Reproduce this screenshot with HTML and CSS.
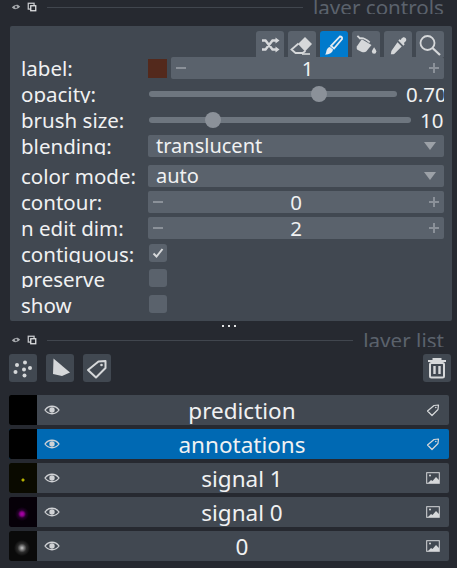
FILE: index.html
```html
<!DOCTYPE html>
<html lang="en">
<head>
    <meta charset="UTF-8">
    <title>napari layers</title>
    <link rel="stylesheet" href="styles.css">
</head>
<body>

    <div class="dock-title">
        <svg class="title-icon" viewBox="0 0 12 12"><path d="M1 6.500C3 4 6 3 8.500 3.500L11 5.500C9 8 6 9 3.500 8.500Z" fill="#a6a9ad"/><circle cx="6" cy="6" r="1.500" fill="#3a3d44"/></svg>
        <svg class="title-icon" viewBox="0 0 12 12"><rect x="1.500" y="1.500" width="7" height="7" fill="none" stroke="#c9cbce" stroke-width="1.500"/><rect x="4.500" y="4.500" width="6" height="6" fill="#262930" stroke="#e4e5e6" stroke-width="1.500"/></svg>
        <div class="title-line"></div>
        <span class="title-text">layer controls</span>
    </div>

    <div class="controls">
        <div class="mode-buttons">
            <div class="mode-btn">
                <svg viewBox="0 0 28 26"><g transform="translate(0 1)"><path d="M6 8.500h3.500l7 9H20M6 17.500h3.500l7-9H20" fill="none" stroke="#d6d8da" stroke-width="2.400"/><path d="M19.500 5.500l4 3-4 3zM19.500 14.500l4 3-4 3z" fill="#d6d8da"/></g></svg>
            </div>
            <div class="mode-btn">
                <svg viewBox="0 0 28 26"><path d="M17 6l7 7-7 7.500-7-7.500z" fill="#d6d8da"/><path d="M10.500 12.500L3.500 18.500l4 3.500h7l3-2" fill="none" stroke="#d6d8da" stroke-width="1.800"/><path d="M14 23h8" stroke="#d6d8da" stroke-width="1.600"/></svg>
            </div>
            <div class="mode-btn mode-btn-active">
                <svg viewBox="0 0 28 26"><g transform="translate(-2 2)"><path d="M22 3.500c1.500 0 2.500 1 2 2.500L16 15.500l-3-2.500z" fill="none" stroke="#e4eaf0" stroke-width="1.800"/><path d="M12 14l3 2.500c-.5 3.500-3.500 5-8 5 1.500-1.500 1-3 1.800-4.800.7-1.500 2-2.500 3.200-2.700z" fill="#e4eaf0"/></g></svg>
            </div>
            <div class="mode-btn">
                <svg viewBox="0 0 28 26"><g transform="translate(1 3) scale(.88)"><path d="M5 2l3 3" stroke="#d6d8da" stroke-width="2"/><path d="M10 6l11 6.500-6 7.500c-1 1-3 1-5 .5l-5-2.500c-1-1-1-2-.5-4z" fill="#d6d8da"/><path d="M7 5.500c3-2 7-.5 12 4" fill="none" stroke="#d6d8da" stroke-width="2"/><path d="M24 15c2 3 2.500 4 2.500 5a2.500 2.500 0 0 1-5 0c0-1 .5-2 2.500-5z" fill="#d6d8da"/></g></svg>
            </div>
            <div class="mode-btn">
                <svg viewBox="0 0 28 26"><g transform="translate(2 4) scale(.85)"><path d="M18 4.500c1.500-2 3.500-2.500 5-1s1 3.500-1 5l-1 1 1 1.500-1.500 1.500-6-6L16 5l1.500 1z" fill="#d6d8da"/><path d="M13.500 8.500l5 5-8.500 8.500c-1 .5-2 1-3 .5-1 .5-2 0-1-1 0-1 0-2 .5-3z" fill="#d6d8da"/></g></svg>
            </div>
            <div class="mode-btn">
                <svg viewBox="0 0 28 26"><circle cx="11.500" cy="12" r="7" fill="none" stroke="#d6d8da" stroke-width="1.800"/><path d="M16.500 17l7.500 7" stroke="#d6d8da" stroke-width="2.200"/></svg>
            </div>
        </div>

        <div class="row">
            <span class="row-label">label:</span>
            <div class="label-control">
                <div class="swatch"></div>
                <div class="spin">
                    <span class="spin-minus"></span>
                    <span class="spin-value">1</span>
                    <span class="spin-plus"></span>
                </div>
            </div>
        </div>
        <div class="row">
            <span class="row-label">opacity:</span>
            <div class="slider-control">
                <div class="slider slider-short"><div class="slider-thumb thumb-opacity"></div></div>
                <span class="slider-value">0.70</span>
            </div>
        </div>
        <div class="row">
            <span class="row-label">brush size:</span>
            <div class="slider-control">
                <div class="slider"><div class="slider-thumb thumb-brush"></div></div>
                <span class="slider-value">10</span>
            </div>
        </div>
        <div class="row row-combo-first">
            <span class="row-label">blending:</span>
            <div class="combo"><span>translucent</span><div class="combo-arrow"></div></div>
        </div>
        <div class="row">
            <span class="row-label">color mode:</span>
            <div class="combo"><span>auto</span><div class="combo-arrow"></div></div>
        </div>
        <div class="row">
            <span class="row-label">contour:</span>
            <div class="spin">
                <span class="spin-minus"></span>
                <span class="spin-value">0</span>
                <span class="spin-plus"></span>
            </div>
        </div>
        <div class="row">
            <span class="row-label">n edit dim:</span>
            <div class="spin">
                <span class="spin-minus"></span>
                <span class="spin-value">2</span>
                <span class="spin-plus"></span>
            </div>
        </div>
        <div class="row row-check">
            <span class="row-label">contiguous:</span>
            <div class="checkbox">
                <svg viewBox="0 0 18 18"><path d="M4.500 9.500l3 3 6-7.500" fill="none" stroke="#d6d8da" stroke-width="2"/></svg>
            </div>
        </div>
        <div class="row row-check row-preserve">
            <span class="row-label">preserve</span>
            <div class="checkbox"></div>
        </div>
        <div class="row row-check">
            <span class="row-label">show</span>
            <div class="checkbox"></div>
        </div>
    </div>

    <div class="splitter"><i></i><i></i><i></i></div>

    <div class="dock-title">
        <svg class="title-icon" viewBox="0 0 12 12"><path d="M1 6.500C3 4 6 3 8.500 3.500L11 5.500C9 8 6 9 3.500 8.500Z" fill="#a6a9ad"/><circle cx="6" cy="6" r="1.500" fill="#3a3d44"/></svg>
        <svg class="title-icon" viewBox="0 0 12 12"><rect x="1.500" y="1.500" width="7" height="7" fill="none" stroke="#c9cbce" stroke-width="1.500"/><rect x="4.500" y="4.500" width="6" height="6" fill="#262930" stroke="#e4e5e6" stroke-width="1.500"/></svg>
        <div class="title-line"></div>
        <span class="title-text">layer list</span>
    </div>

    <div class="list-buttons">
        <div class="list-btn">
            <svg viewBox="0 0 28 28"><g fill="#d6d8da"><circle cx="8" cy="11" r="2"/><circle cx="16" cy="8.500" r="2"/><circle cx="21" cy="14" r="2"/><circle cx="15" cy="15.500" r="2"/><circle cx="6.500" cy="18" r="2"/><circle cx="15.500" cy="21.500" r="2"/></g></svg>
        </div>
        <div class="list-btn">
            <svg viewBox="0 0 28 28"><path d="M7.500 4.500L24 18.500 16 22 7 20z" fill="#d6d8da"/></svg>
        </div>
        <div class="list-btn">
            <svg viewBox="0 0 28 28"><path d="M5 16L15.500 7.500l7-.5 0 7L13 23.500z" fill="none" stroke="#d6d8da" stroke-width="2" stroke-linejoin="round"/><circle cx="18.500" cy="11" r="1.300" fill="#d6d8da"/></svg>
        </div>
        <div class="list-btn list-btn-trash">
            <svg viewBox="0 0 28 28"><path d="M5 7h18M10.500 6.500V5h7v1.500" fill="none" stroke="#d6d8da" stroke-width="2"/><rect x="7" y="9" width="14" height="14.500" rx="1.500" fill="none" stroke="#d6d8da" stroke-width="2"/><path d="M11.500 12v8M16.500 12v8" stroke="#d6d8da" stroke-width="2.400"/></svg>
        </div>
    </div>

    <div class="layer-list">
        <div class="layer">
            <div class="thumb"></div>
            <svg class="eye" viewBox="0 0 16 12"><path d="M1 6c3.500-5 10.500-5 14 0-3.500 5-10.500 5-14 0z" fill="none" stroke="#d0d2d5" stroke-width="1.300"/><circle cx="8" cy="6" r="2.700" fill="#d0d2d5"/></svg>
            <span class="layer-name">prediction</span>
            <svg class="layer-type" viewBox="0 0 14 14"><path d="M1.500 8L8 2.500l4.500-.5-.5 4.500L6 12.500z" fill="none" stroke="#d6d8da" stroke-width="1.200" stroke-linejoin="round"/><circle cx="9.800" cy="4.500" r=".8" fill="#d6d8da"/></svg>
        </div>
        <div class="layer layer-selected">
            <div class="thumb"></div>
            <svg class="eye" viewBox="0 0 16 12"><path d="M1 6c3.500-5 10.500-5 14 0-3.500 5-10.500 5-14 0z" fill="none" stroke="#d0d2d5" stroke-width="1.300"/><circle cx="8" cy="6" r="2.700" fill="#d0d2d5"/></svg>
            <span class="layer-name">annotations</span>
            <svg class="layer-type" viewBox="0 0 14 14"><path d="M1.500 8L8 2.500l4.500-.5-.5 4.500L6 12.500z" fill="none" stroke="#d6d8da" stroke-width="1.200" stroke-linejoin="round"/><circle cx="9.800" cy="4.500" r=".8" fill="#d6d8da"/></svg>
        </div>
        <div class="layer">
            <div class="thumb thumb-yellow"></div>
            <svg class="eye" viewBox="0 0 16 12"><path d="M1 6c3.500-5 10.500-5 14 0-3.500 5-10.500 5-14 0z" fill="none" stroke="#d0d2d5" stroke-width="1.300"/><circle cx="8" cy="6" r="2.700" fill="#d0d2d5"/></svg>
            <span class="layer-name">signal 1</span>
            <svg class="layer-type" viewBox="0 0 14 14"><rect x=".7" y="1.700" width="12.600" height="10.600" fill="none" stroke="#d6d8da" stroke-width="1"/><circle cx="4" cy="4.500" r="1" fill="#d6d8da"/><path d="M2 12l3-3 1.500 1L10 6l3 3v3z" fill="#d6d8da"/></svg>
        </div>
        <div class="layer">
            <div class="thumb thumb-magenta"></div>
            <svg class="eye" viewBox="0 0 16 12"><path d="M1 6c3.500-5 10.500-5 14 0-3.500 5-10.500 5-14 0z" fill="none" stroke="#d0d2d5" stroke-width="1.300"/><circle cx="8" cy="6" r="2.700" fill="#d0d2d5"/></svg>
            <span class="layer-name">signal 0</span>
            <svg class="layer-type" viewBox="0 0 14 14"><rect x=".7" y="1.700" width="12.600" height="10.600" fill="none" stroke="#d6d8da" stroke-width="1"/><circle cx="4" cy="4.500" r="1" fill="#d6d8da"/><path d="M2 12l3-3 1.500 1L10 6l3 3v3z" fill="#d6d8da"/></svg>
        </div>
        <div class="layer">
            <div class="thumb thumb-gray"></div>
            <svg class="eye" viewBox="0 0 16 12"><path d="M1 6c3.500-5 10.500-5 14 0-3.500 5-10.500 5-14 0z" fill="none" stroke="#d0d2d5" stroke-width="1.300"/><circle cx="8" cy="6" r="2.700" fill="#d0d2d5"/></svg>
            <span class="layer-name">0</span>
            <svg class="layer-type" viewBox="0 0 14 14"><rect x=".7" y="1.700" width="12.600" height="10.600" fill="none" stroke="#d6d8da" stroke-width="1"/><circle cx="4" cy="4.500" r="1" fill="#d6d8da"/><path d="M2 12l3-3 1.500 1L10 6l3 3v3z" fill="#d6d8da"/></svg>
        </div>
    </div>

</body>
</html>
```

FILE: styles.css
```css
body {
    font-family: "Noto Sans", "Open Sans", sans-serif;
    background: #262930;
    color: #f0f1f2;
    margin: 0;
    height: 568px;
    overflow: hidden;
    font-size: 20.500px;
}
svg {
    display: block;
}
.dock-title {
    display: flex;
    align-items: center;
    height: 14px;
    padding: 0 13px 0 11px;
    overflow: hidden;
}
.title-icon {
    width: 10px;
    height: 10px;
    margin-right: 6px;
}
.title-line {
    flex: 1;
    height: 1px;
    margin: 0 10px 0 4px;
    background: #41464e;
}
.title-text {
    height: 14px;
    line-height: 15px;
    font-size: 20.600px;
    color: #5b626c;
    overflow: hidden;
}
.controls {
    box-sizing: border-box;
    width: 442px;
    height: 295px;
    margin: 12px 0 0 10px;
    padding: 5px 8px 0 11px;
    background: #414851;
    border-radius: 2px;
}
.mode-buttons {
    display: flex;
    justify-content: flex-end;
    gap: 4px;
    height: 26px;
}
.mode-btn {
    width: 28px;
    height: 26px;
    background: #5a626c;
    border-radius: 3px 3px 0 0;
}
.mode-btn-active {
    background: #007acc;
}
.row {
    display: grid;
    grid-template-columns: 127px minmax(0, 1fr);
    align-items: center;
    height: 22px;
    margin-bottom: 4px;
}
.row-combo-first {
    margin-bottom: 8px;
}
.row-check {
    height: 20px;
    margin-bottom: 5px;
}
.row-preserve {
    margin-bottom: 6px;
}
.row-label {
    align-self: start;
    height: 20px;
    line-height: 22px;
    overflow: hidden;
    white-space: nowrap;
}
.label-control {
    display: flex;
    gap: 4px;
    align-items: center;
}
.swatch {
    width: 19px;
    height: 19px;
    background: #53291c;
}
.spin {
    flex: 1;
    display: flex;
    align-items: center;
    height: 22px;
    background: #5a626c;
    border-radius: 2px;
    padding: 0 5px;
}
.spin-value {
    flex: 1;
    text-align: center;
    line-height: 22px;
}
.spin-minus,
.spin-plus {
    position: relative;
    width: 10px;
    height: 10px;
}
.spin-minus::before,
.spin-plus::before,
.spin-plus::after {
    content: "";
    position: absolute;
    background: #8b9199;
}
.spin-minus::before,
.spin-plus::before {
    left: 0;
    top: 4px;
    width: 10px;
    height: 2px;
}
.spin-plus::after {
    left: 4px;
    top: 0;
    width: 2px;
    height: 10px;
}
.slider-control {
    display: flex;
    align-items: center;
    gap: 9px;
    min-width: 0;
}
.slider {
    position: relative;
    flex: none;
    width: 262px;
    height: 6px;
    margin-left: 1px;
    background: #6e767f;
    border-radius: 3px;
}
.slider-short {
    width: 248px;
}
.slider-thumb {
    position: absolute;
    top: -5px;
    width: 16px;
    height: 16px;
    border-radius: 50%;
    background: #8b9199;
}
.thumb-opacity {
    left: 162px;
}
.thumb-brush {
    left: 56px;
}
.slider-value {
    flex: 1;
    min-width: 0;
    overflow: hidden;
    white-space: nowrap;
    line-height: 22px;
}
.combo {
    display: flex;
    align-items: center;
    justify-content: space-between;
    height: 22px;
    padding: 0 8px;
    background: #5a626c;
    border-radius: 2px;
    font-size: 20px;
    line-height: 22px;
}
.combo-arrow {
    width: 0;
    height: 0;
    border-left: 6.500px solid transparent;
    border-right: 6.500px solid transparent;
    border-top: 8px solid #9ca1a7;
}
.checkbox {
    width: 18px;
    height: 18px;
    margin-left: 1px;
    background: #5a626c;
    border-radius: 3px;
}
.splitter {
    display: flex;
    justify-content: center;
    gap: 4px;
    height: 12px;
    padding-top: 4px;
    box-sizing: border-box;
}
.splitter i {
    width: 2px;
    height: 2px;
    background: #e4e5e6;
}
.list-buttons {
    display: flex;
    gap: 9px;
    margin: 7px 6px 0 9px;
}
.list-btn {
    width: 28px;
    height: 28px;
    background: #414851;
    border-radius: 3px;
}
.list-btn-trash {
    margin-left: auto;
}
.layer-list {
    display: flex;
    flex-direction: column;
    gap: 4px;
    margin: 13px 8px 0 9px;
}
.layer {
    display: flex;
    align-items: center;
    height: 30px;
    background: #414851;
    border-radius: 2px;
    font-size: 22.500px;
    overflow: hidden;
}
.layer-selected {
    background: #0069b3;
}
.thumb {
    width: 28px;
    height: 30px;
    flex: none;
    background: #000;
}
.thumb-yellow {
    background: radial-gradient(circle at 14px 17px, #b5b000 0, #b5b000 1px, #0a0a00 2px);
}
.thumb-magenta {
    background: radial-gradient(circle at 13px 17px, #b000b0 0, #8a008a 2px, #24002a 4px, #060008 7px);
}
.thumb-gray {
    background: radial-gradient(circle at 13px 17px, #c8c8c8 0, #808080 2px, #2c2c2c 4.500px, #0a0a0a 8px);
}
.eye {
    width: 16px;
    height: 12px;
    margin-left: 7px;
    flex: none;
}
.layer-name {
    flex: 1;
    text-align: center;
    line-height: 33px;
    padding-right: 2px;
}
.layer-type {
    width: 14px;
    height: 14px;
    margin-right: 9px;
    flex: none;
}
```
